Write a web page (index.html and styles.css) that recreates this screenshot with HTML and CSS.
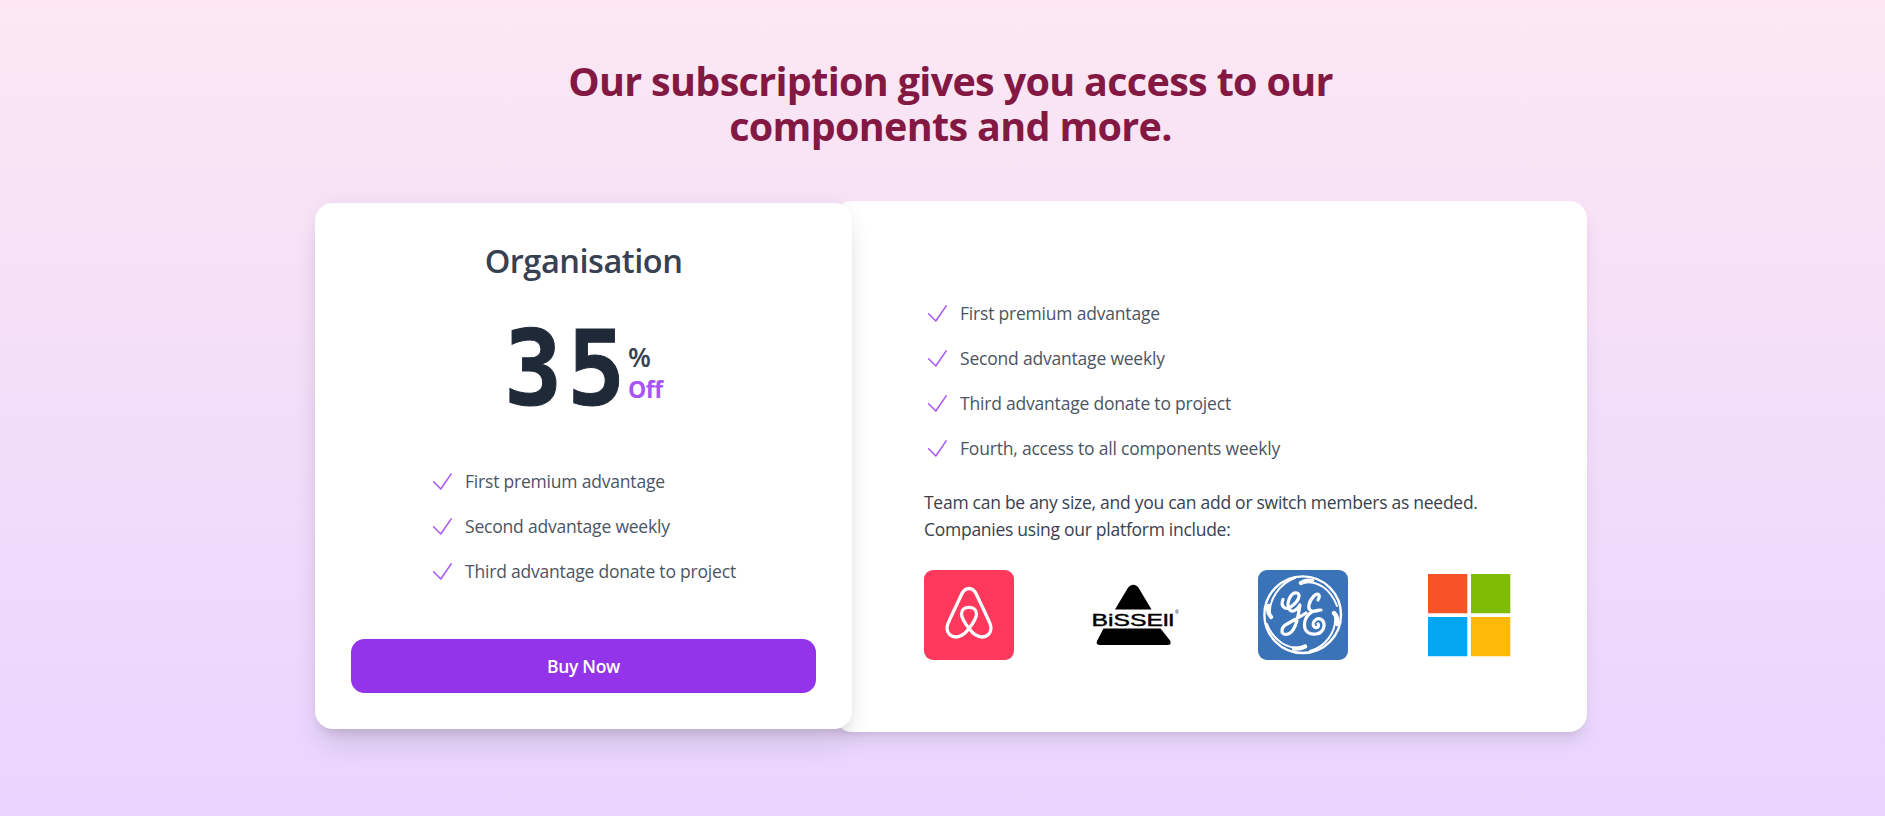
FILE: index.html
```html
<!DOCTYPE html>
<html lang="en">
<head>
<meta charset="utf-8">
<title>Subscription</title>
<link rel="stylesheet" href="styles.css">
</head>
<body>
<svg class="defs" width="0" height="0"><symbol id="check" viewBox="0 0 27 27"><path d="M4.6 13.8 11.8 21 22.2 5.800" fill="none" stroke="currentColor" stroke-width="1.5" stroke-linecap="round" stroke-linejoin="round"/></symbol></svg>
<main class="page">
  <h1 class="title"><span>Our subscription gives you access to our</span><span>components and more.</span></h1>
  <div class="cards">
    <section class="plan">
      <h2 class="plan-name">Organisation</h2>
      <div class="price"><span class="amount">35</span><div class="unit"><span class="percent">%</span><span class="off">Off</span></div></div>
      <ul class="list plan-list">
        <li><svg class="check"><use href="#check"/></svg><span>First premium advantage</span></li>
        <li><svg class="check"><use href="#check"/></svg><span>Second advantage weekly</span></li>
        <li><svg class="check"><use href="#check"/></svg><span>Third advantage donate to project</span></li>
      </ul>
      <button class="buy">Buy Now</button>
    </section>
    <section class="details">
      <ul class="list">
        <li><svg class="check"><use href="#check"/></svg><span>First premium advantage</span></li>
        <li><svg class="check"><use href="#check"/></svg><span>Second advantage weekly</span></li>
        <li><svg class="check"><use href="#check"/></svg><span>Third advantage donate to project</span></li>
        <li><svg class="check"><use href="#check"/></svg><span>Fourth, access to all components weekly</span></li>
      </ul>
      <p class="note">Team can be any size, and you can add or switch members as needed.<br>Companies using our platform include:</p>
      <div class="logos">
        <svg class="logo" viewBox="0 0 90 90"><rect width="90" height="90" fill="#ff385c"/><path d="M45 58.5C40 52 37.5 48 37.5 44C37.5 39.8 40.8 37.3 45 37.3S52.500 39.800 52.500 44C52.500 48 50 52 45 58.500C40.500 64.500 36.500 67 32 67C26.500 67 23 63 23 58C23 55.500 24 53 25.500 50L37.500 24.500C39.500 20.300 41.500 18.500 45 18.500S50.500 20.300 52.500 24.500L64.500 50C66 53 67 55.500 67 58C67 63 63.500 67 58 67C53.500 67 49.500 64.500 45 58.500Z" fill="none" stroke="#fff" stroke-width="3.300"/></svg>
        <svg class="logo" viewBox="0 0 90 90"><path d="M36.500 18.500Q39 14.800 42.300 14.800T48 18.500L60.500 39.500H24Z"/><path d="M12.500 58.500H69.500L79 70.500Q81 75 76.500 75H9Q4.500 75 6 71Z"/><text x="0.500" y="56" class="bissell" textLength="82.500" lengthAdjust="spacingAndGlyphs">BiSSEll</text><text x="84" y="44" class="reg">®</text></svg>
        <svg class="logo" viewBox="0 0 90 90"><rect width="90" height="90" fill="#3b73b9"/><g fill="none" stroke="#fff" stroke-linecap="round" stroke-linejoin="round"><circle cx="44.700" cy="44.700" r="38.300" stroke-width="2.400"/><path stroke-width="2" d="M43 13C60 9 73 20 79 36M77 45C79 62 67 77 52 81M47 77C30 81 15 70 9 54M12 46C10 30 22 13 37 8"/><path stroke-width="4.400" d="M43 13Q47 10 54 11M76 43Q80 47 79 54M47 76.500Q42 79 36 78.500M13 47Q9 42 10.500 36"/><path stroke-width="3.200" d="M25 29.500C22 37 28 41 34 36C41 31 43 24 39 23C33 22 28 32 31 39C34 44 40 39 42 35C40 46 38 64 28 64.500C22 64.500 23 57 29 54C36 50 42 47 48 43"/><path stroke-width="3.200" d="M60 30C63 25 60 22 56 26C50 32 49 40 54 41C57 42 60 40 63 40C52 40 46.500 47 46.500 55C46.500 62 52 65 58 64C66 63 68 54 64 50C59 46 53 53 56 56.500C58 59 62 57 60 54"/></g></svg>
        <svg class="logo square" viewBox="0 0 90 90"><path fill="#f65326" d="M3 4h39.300v39.300H3z"/><path fill="#80bc06" d="M46 4h39.300v39.300H46z"/><path fill="#05a6f0" d="M3 47h39.300v39.300H3z"/><path fill="#ffba08" d="M46 47h39.300v39.300H46z"/></svg>
      </div>
    </section>
  </div>
</main>
</body>
</html>
```
FILE: styles.css
```css
* { box-sizing: border-box; margin: 0; padding: 0; }
body { height: 816px; overflow: hidden; font: 17.5px/27px "Open Sans", "Noto Sans", sans-serif; letter-spacing: -0.2px; color: #374151; }
.defs { position: absolute; }
.page { height: 816px; padding: 59px 299px 0 315px; background: linear-gradient(to bottom, #fce7f3, #e9d5ff); }
.title { height: 142px; text-align: center; font-size: 39.5px; line-height: 45px; font-weight: 700; letter-spacing: -0.68px; color: #831843; }
.title span { display: block; }
.cards { display: flex; align-items: flex-start; }
.plan { position: relative; z-index: 1; flex: none; width: 537px; height: 526px; margin-top: 2px; padding: 35px 36px 36px; display: flex; flex-direction: column; align-items: center; background: #fff; border-radius: 18px; box-shadow: 0 22px 28px -6px rgba(0,0,0,.1), 0 9px 11px -6px rgba(0,0,0,.1), 0 0 20px rgba(0,0,0,.05); }
.plan-name { font-size: 32.6px; line-height: 45px; font-weight: 600; letter-spacing: -0.5px; }
.price { display: flex; align-self: flex-start; height: 108px; margin: 30px 0 0 153px; }
/* Condensed digits with a wide pitch. */
.amount { width: 124px; padding-top: 2px; font: 700 103px/108px "DejaVu Sans Mono", monospace; letter-spacing: 5px; color: #1f2937; -webkit-text-stroke: 1px #1f2937; transform: scaleX(.94); transform-origin: left; }
.unit { display: flex; flex-direction: column; padding-top: 28px; }
.percent { font-size: 26.5px; line-height: 32px; font-weight: 600; }
.off { font-size: 23px; line-height: 33px; font-weight: 700; letter-spacing: -0.5px; color: #a855f7; }
.list { list-style: none; display: flex; flex-direction: column; gap: 18px; color: #4b5563; }
.list li { display: flex; gap: 9px; height: 27px; white-space: nowrap; }
.check { width: 27px; height: 27px; flex: none; color: #a855f7; }
.plan-list { width: 309px; margin-top: 47px; }
.buy { width: 465px; height: 54px; margin-top: auto; border: 0; border-radius: 13.5px; background: #9333ea; color: #fff; font: 600 17.5px/27px "Open Sans", sans-serif; letter-spacing: -0.3px; }
.details { flex: none; width: 753px; height: 531px; margin-left: -18px; padding: 99px 72px 0 90px; background: #fff; border-radius: 18px; box-shadow: 0 11px 17px -3px rgba(0,0,0,.1), 0 4px 7px -4px rgba(0,0,0,.1); }
.note { margin-top: 27px; white-space: nowrap; letter-spacing: -0.27px; }
.logos { display: flex; justify-content: space-between; margin-top: 27px; }
.logo { width: 90px; height: 90px; border-radius: 9px; }
.square { border-radius: 0; }
.bissell { font: 16.5px "Liberation Sans", sans-serif; letter-spacing: 0; stroke: #000; stroke-width: .4px; }
.reg { font: 5px "Liberation Sans", sans-serif; }
```
